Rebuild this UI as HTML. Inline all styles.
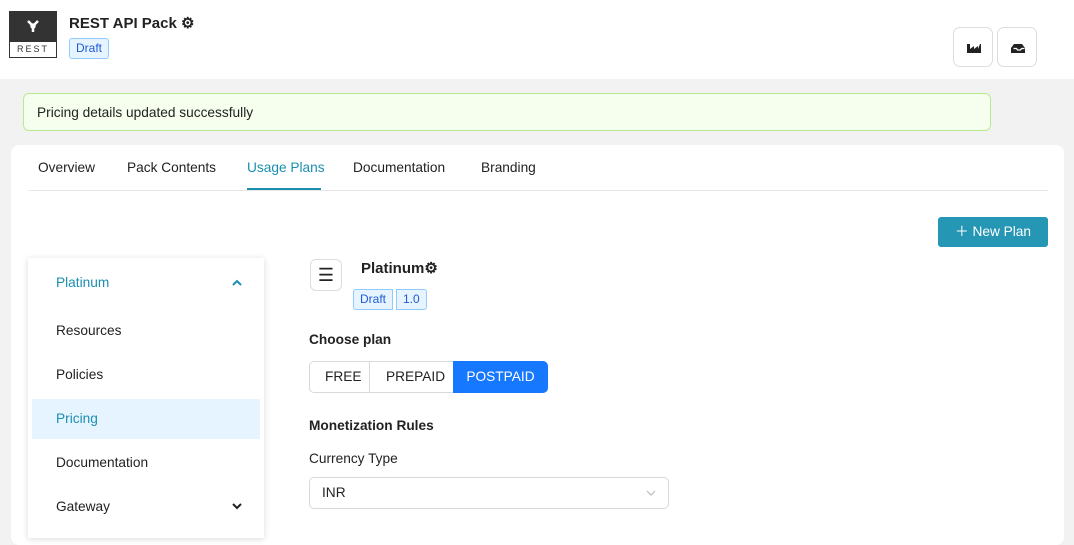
<!DOCTYPE html><html><head><style>
body{margin:0;width:1074px;height:528px;overflow:hidden;background:#f2f2f2;font-family:"Liberation Sans",sans-serif;color:#222;position:relative;font-size:13.7px}
.a{position:absolute}
.badge{background:#e6f4ff;border:1px solid #91caff;color:#1f5bd6;font-size:12px;border-radius:3px;padding:0 6px;height:19px;line-height:19px}
.ib{width:38px;height:38px;border:1px solid #ddd;border-radius:7px;background:#fff}
.menu>div{position:absolute;left:4px;width:228px;height:40px;line-height:40px;padding-left:24px;box-sizing:border-box}
.chev{position:absolute;right:18px;top:15px}
</style></head><body>
<div class="a" style="left:0;top:0;width:1074px;height:79px;background:#fff"></div>
<div class="a" style="left:9px;top:11px;width:48px;height:47px;background:#333;border:1px solid #333;box-sizing:border-box">
<svg width="46" height="30" class="a" style="left:0;top:0"><g stroke="#fff" stroke-width="2.5" fill="#fff"><line x1="18" y1="9" x2="23" y2="14"/><line x1="28" y1="9" x2="23" y2="14"/><line x1="23" y1="14" x2="23" y2="20"/><circle cx="23" cy="14" r="1.5"/></g></svg>
<div class="a" style="left:0;bottom:0;width:46px;height:15px;background:#fff;font-size:9px;letter-spacing:2px;text-align:center;line-height:15px;color:#333">REST</div></div>
<div class="a" style="left:69px;top:14px;font-weight:bold;font-size:15px">REST API Pack ⚙</div>
<div class="a badge" style="left:69px;top:38px">Draft</div>
<div class="a ib" style="left:953px;top:27px"><svg width="38" height="38"><path d="M13 16h3v5l4-3v3l4-3v3l2-5h1v9H13z" fill="#222"/></svg></div>
<div class="a ib" style="left:997px;top:27px"><svg width="38" height="38"><path d="M13 25v-5l3-4h8l3 4v5z" fill="#222"/><path d="M15.5 20.5h3l1 1.5h3l1-1.5h3" stroke="#fff" stroke-width="1.2" fill="none"/></svg></div>
<div class="a" style="left:23px;top:93px;width:968px;height:38px;background:#f6ffed;border:1px solid #b7eb8f;border-radius:6px;line-height:38px;padding-left:13px;box-sizing:border-box">Pricing details updated successfully</div>
<div class="a" style="left:11px;top:145px;width:1053px;height:400px;background:#fff;border-radius:8px"></div>
<div class="a" style="left:28px;top:190px;width:1020px;height:1px;background:#e8e8e8"></div>
<div class="a" style="left:38px;top:160px">Overview</div>
<div class="a" style="left:127px;top:160px">Pack Contents</div>
<div class="a" style="left:247px;top:160px;color:#1b8fb0">Usage Plans</div>
<div class="a" style="left:247px;top:188px;width:74px;height:2px;background:#1b8fb0"></div>
<div class="a" style="left:353px;top:160px">Documentation</div>
<div class="a" style="left:481px;top:160px">Branding</div>
<div class="a" style="left:938px;top:217px;width:110px;height:30px;background:#2596b4;border-radius:3px;color:#fff;line-height:30px;text-align:center">＋ New Plan</div>
<div class="a menu" style="left:28px;top:258px;width:236px;height:280px;background:#fff;box-shadow:0 1px 6px rgba(0,0,0,.15)">
<div style="top:5px;color:#1b8fb0">Platinum<svg class="chev" width="10" height="10"><path d="M1 7l4-4 4 4" stroke="#1b8fb0" stroke-width="2" fill="none"/></svg></div>
<div style="top:53px">Resources</div>
<div style="top:97px">Policies</div>
<div style="top:141px;color:#1b8fb0;background:#e6f4ff">Pricing</div>
<div style="top:185px">Documentation</div>
<div style="top:229px">Gateway<svg class="chev" width="10" height="10" style="top:14px"><path d="M1 3l4 4 4-4" stroke="#222" stroke-width="2" fill="none"/></svg></div>
</div>
<div class="a" style="left:310px;top:259px;width:30px;height:30px;border:1px solid #ddd;border-radius:6px;text-align:center;line-height:30px;font-size:18px">☰</div>
<div class="a" style="left:361px;top:259px;font-weight:bold;font-size:15px">Platinum⚙</div>
<div class="a badge" style="left:353px;top:289px;border-radius:3px 0 0 3px">Draft</div>
<div class="a badge" style="left:396px;top:289px;border-radius:0 3px 3px 0">1.0</div>
<div class="a" style="left:309px;top:332px;font-weight:bold">Choose plan</div>
<div class="a" style="left:309px;top:361px;width:238px;height:32px;border:1px solid #d9d9d9;border-radius:5px;box-sizing:border-box"></div>
<div class="a" style="left:325px;top:369px">FREE</div>
<div class="a" style="left:369px;top:361px;width:1px;height:32px;background:#d9d9d9"></div>
<div class="a" style="left:386px;top:369px">PREPAID</div>
<div class="a" style="left:453px;top:361px;width:95px;height:32px;background:#1677ff;border-radius:0 5px 5px 0;color:#fff;line-height:32px;text-align:center">POSTPAID</div>
<div class="a" style="left:309px;top:418px;font-weight:bold">Monetization Rules</div>
<div class="a" style="left:309px;top:451px">Currency Type</div>
<div class="a" style="left:309px;top:477px;width:360px;height:32px;border:1px solid #d9d9d9;border-radius:5px;box-sizing:border-box;line-height:30px;padding-left:12px">INR<svg style="position:absolute;right:12px;top:11px" width="10" height="8"><path d="M1 2l4 4 4-4" stroke="#bbb" stroke-width="1.2" fill="none"/></svg></div>
</body></html>
